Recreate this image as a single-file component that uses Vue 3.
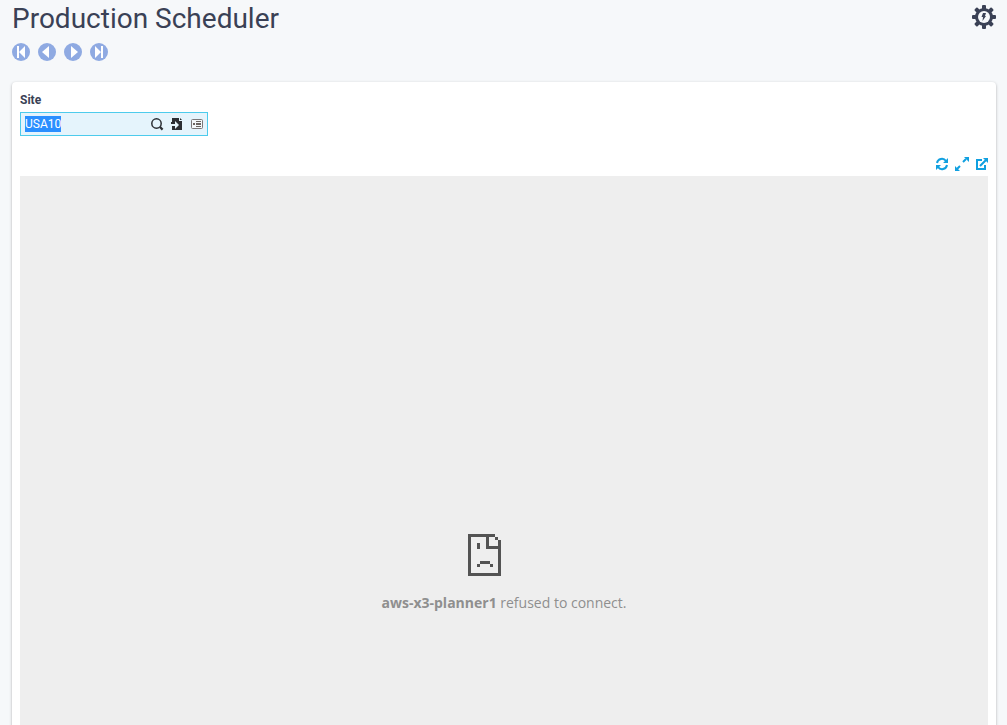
<script setup>
import { onMounted, ref } from 'vue'

const site = ref('USA10')
const siteInput = ref(null)

const records = [
  { label: 'First record', path: 'M5 3h2v12H5z M13 3v12L7 9z' },
  { label: 'Previous record', path: 'M11 3v12L4 9z' },
  { label: 'Next record', path: 'M7 3v12l7-6z' },
  { label: 'Last record', path: 'M11 3h2v12h-2z M5 3v12l6-6z' }
]

onMounted(() => {
  siteInput.value.focus()
  siteInput.value.select()
})
</script>

<template>
  <div class="page">
    <header class="header">
      <div>
        <h1>Production Scheduler</h1>
        <nav class="records" aria-label="Records">
          <button v-for="r in records" :key="r.label" type="button" :aria-label="r.label">
            <svg width="18" height="18" viewBox="0 0 18 18">
              <circle cx="9" cy="9" r="9" fill="#8faae2" />
              <path :d="r.path" fill="#fff" />
            </svg>
          </button>
        </nav>
      </div>
      <button type="button" class="settings" aria-label="Actions">
        <svg width="24" height="24" viewBox="0 0 24 24">
          <g fill="#3a4155">
            <rect x="10" y="0" width="4" height="24" rx="1" />
            <rect x="10" y="0" width="4" height="24" rx="1" transform="rotate(45 12 12)" />
            <rect x="10" y="0" width="4" height="24" rx="1" transform="rotate(90 12 12)" />
            <rect x="10" y="0" width="4" height="24" rx="1" transform="rotate(135 12 12)" />
            <circle cx="12" cy="12" r="9" />
          </g>
          <circle cx="12" cy="12" r="6" fill="#f6f8fa" />
          <path d="M11 8h3l-1 3h1l-3.500 5 .5-4h-1.500z" fill="#3a4155" />
        </svg>
      </button>
    </header>

    <main class="panel">
      <label for="site">Site</label>
      <div class="field">
        <input id="site" ref="siteInput" v-model="site" type="text" autocomplete="off" spellcheck="false" />
        <button type="button" aria-label="Search">
          <svg width="14" height="14" viewBox="0 0 14 14" fill="none" stroke="#2b2e33">
            <circle cx="6.500" cy="6.500" r="4.700" stroke-width="1.500" />
            <path d="M10 10l2.600 2.600" stroke-width="2.200" />
          </svg>
        </button>
        <button type="button" aria-label="Jump to">
          <svg width="14" height="14" viewBox="0 0 14 14">
            <path d="M2 1h7v3h3v9H2z M10 1l2 2h-2z" fill="#2b2e33" />
            <path d="M1 5h2v2h2V4l4 4-4 4V9H1z" fill="#e5f4fc" />
            <path d="M1 5h2v2H1z" fill="#2b2e33" />
          </svg>
        </button>
        <button type="button" aria-label="Details">
          <svg width="14" height="14" viewBox="0 0 14 14">
            <rect x="1.500" y="2.500" width="11" height="9" rx="1" fill="#f4f8fa" stroke="#7b7779" />
            <path d="M3 6h2v2H3z M6 4h5v1H6z M6 6h5v2H6z M6 9h5v1H6z" fill="#6b6562" />
          </svg>
        </button>
      </div>

      <div class="tools">
        <button type="button" aria-label="Refresh">
          <svg width="14" height="14" viewBox="0 0 14 14">
            <path d="M3 6A5 5 0 0 1 12 4M13 8A5 5 0 0 1 4 10" fill="none" stroke="#11a0e0" stroke-width="2" />
            <path d="M14 1v5H9z M2 13V8h5z" fill="#11a0e0" />
          </svg>
        </button>
        <button type="button" aria-label="Expand">
          <svg width="14" height="14" viewBox="0 0 14 14">
            <path d="M10 0h5v5z M1 9v5h5z" fill="#11a0e0" />
            <path d="M9 5l3-3M6 9l-3 3" stroke="#11a0e0" stroke-width="2" />
          </svg>
        </button>
        <button type="button" aria-label="Open in new window">
          <svg width="14" height="14" viewBox="0 0 14 14">
            <path d="M8 3H3v9h8V8M6 9l6-6" fill="none" stroke="#11a0e0" stroke-width="2" />
            <path d="M9 1h5v5z" fill="#11a0e0" />
          </svg>
        </button>
      </div>

      <section class="frame">
        <svg width="72" height="42" viewBox="0 0 72 42" fill="#535353" shape-rendering="crispEdges" aria-hidden="true">
          <path d="M0 0h27v3H3v36h27V15H18V3h3v9h9V6h3v36H0z M27 3h3v3h-3z M9 9h3v6H9z M12 27h10v3H12z M9 30h3v3H9z M22 30h3v3h-3z" />
        </svg>
        <p><strong>aws-x3-planner1</strong> refused to connect.</p>
      </section>
    </main>
  </div>
</template>

<style>
body {
  margin: 0;
  background: #f6f8fa;
}
</style>

<style scoped>
.page {
  box-sizing: border-box;
  height: 100vh;
  overflow: hidden;
  padding: 0 11px 0 12px;
  background: #f6f8fa;
  color: #3a4155;
  font-family: Roboto, "Liberation Sans", sans-serif;
}
button {
  display: flex;
  margin: 0;
  padding: 0;
  border: 0;
  background: none;
  cursor: pointer;
}
svg {
  overflow: visible;
}
.header {
  display: flex;
  justify-content: space-between;
  align-items: flex-start;
  height: 82px;
}
h1 {
  margin: 0;
  padding-top: 3px;
  font-size: 28px;
  line-height: 32px;
  font-weight: 400;
}
.records {
  display: flex;
  gap: 8px;
  margin-top: 8px;
}
.settings {
  margin-top: 5px;
}
.panel {
  padding: 10px 8px 8px;
  border-radius: 4px;
  background: #fff;
  box-shadow: 0 1px 3px rgba(0, 0, 0, 0.3);
}
label {
  display: block;
  font-size: 12px;
  line-height: 16px;
  font-weight: 700;
}
.field {
  box-sizing: border-box;
  display: flex;
  align-items: center;
  gap: 6px;
  width: 188px;
  height: 24px;
  margin-top: 4px;
  padding: 0 3px 0 4px;
  border: 1px solid #4dcbec;
  background: #e5f4fc;
}
input {
  flex: 1;
  min-width: 0;
  padding: 0;
  border: 0;
  outline: 0;
  background: none;
  color: #3a4155;
  font: 12px/16px Roboto, "Liberation Sans", sans-serif;
}
input::selection {
  background: #2a8fff;
  color: #fff;
}
.tools {
  display: flex;
  justify-content: flex-end;
  gap: 6px;
  padding: 21px 0 5px;
}
.frame {
  display: flex;
  flex-direction: column;
  align-items: center;
  justify-content: center;
  min-height: 796px;
  background: #eee;
}
.frame p {
  margin: 16px 0 0;
  color: #8f8f8f;
  font: 14px/22px "Open Sans", "Noto Sans", sans-serif;
}
</style>
